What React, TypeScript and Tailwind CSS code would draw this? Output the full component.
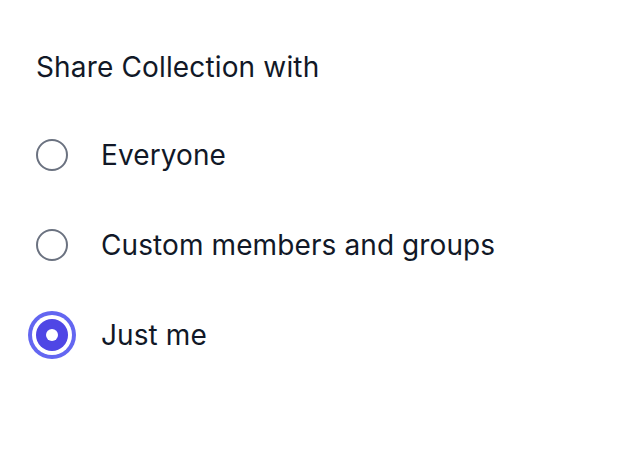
import { useState } from "react";

const OPTIONS = [
  { id: "everyone", label: "Everyone" },
  { id: "custom", label: "Custom members and groups" },
  { id: "me", label: "Just me" },
];

export default function App() {
  const [value, setValue] = useState("me");

  return (
    <div
      className="w-[626px] h-[450px] bg-white pl-[36px] pt-[47px]"
      style={{ fontFamily: "Inter, 'Noto Sans', sans-serif" }}
    >
      <p className="text-[28px] leading-[40px] tracking-[0.15px] text-[#111827]">Share Collection with</p>
      <div className="mt-[48px] flex flex-col gap-[50px]">
        {OPTIONS.map((o) => {
          const checked = value === o.id;
          return (
            <label key={o.id} className="flex items-center gap-[33px] cursor-pointer" onClick={() => setValue(o.id)}>
              <span
                className={
                  checked
                    ? "w-8 h-8 rounded-full bg-[#4f46e5] flex items-center justify-center ring-4 ring-[#6366f1] ring-offset-4 ring-offset-white"
                    : "w-8 h-8 rounded-full border-2 border-[#6b7280] bg-white"
                }
              >
                {checked && <span className="w-3 h-3 rounded-full bg-white" />}
              </span>
              <span className="text-[28px] leading-[40px] tracking-[0.1px] text-[#111827]">{o.label}</span>
            </label>
          );
        })}
      </div>
    </div>
  );
}
